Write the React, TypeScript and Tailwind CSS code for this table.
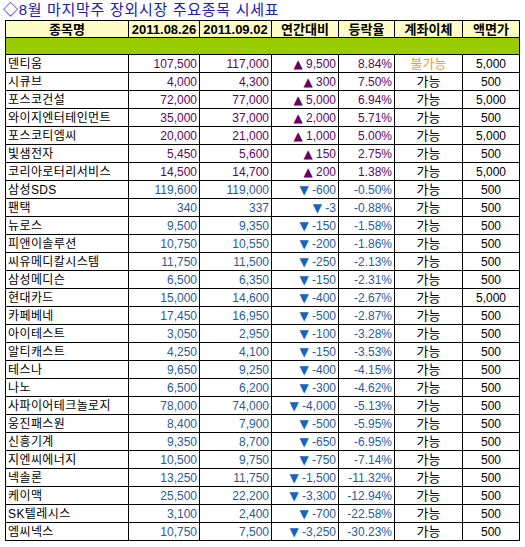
import React from 'react';

type Row = {
  name: string;
  prev: string;
  cur: string;
  diff: string;
  rate: string;
  transfer: string;
  face: string;
  up: boolean;
};

const rows: Row[] = [
  { name: '덴티움', prev: '107,500', cur: '117,000', diff: '9,500', rate: '8.84%', transfer: '불가능', face: '5,000', up: true },
  { name: '시큐브', prev: '4,000', cur: '4,300', diff: '300', rate: '7.50%', transfer: '가능', face: '500', up: true },
  { name: '포스코건설', prev: '72,000', cur: '77,000', diff: '5,000', rate: '6.94%', transfer: '가능', face: '5,000', up: true },
  { name: '와이지엔터테인먼트', prev: '35,000', cur: '37,000', diff: '2,000', rate: '5.71%', transfer: '가능', face: '500', up: true },
  { name: '포스코티엠씨', prev: '20,000', cur: '21,000', diff: '1,000', rate: '5.00%', transfer: '가능', face: '5,000', up: true },
  { name: '빛샘전자', prev: '5,450', cur: '5,600', diff: '150', rate: '2.75%', transfer: '가능', face: '500', up: true },
  { name: '코리아로터리서비스', prev: '14,500', cur: '14,700', diff: '200', rate: '1.38%', transfer: '가능', face: '5,000', up: true },
  { name: '삼성SDS', prev: '119,600', cur: '119,000', diff: '-600', rate: '-0.50%', transfer: '가능', face: '500', up: false },
  { name: '팬택', prev: '340', cur: '337', diff: '-3', rate: '-0.88%', transfer: '가능', face: '500', up: false },
  { name: '뉴로스', prev: '9,500', cur: '9,350', diff: '-150', rate: '-1.58%', transfer: '가능', face: '500', up: false },
  { name: '피앤이솔루션', prev: '10,750', cur: '10,550', diff: '-200', rate: '-1.86%', transfer: '가능', face: '500', up: false },
  { name: '씨유메디칼시스템', prev: '11,750', cur: '11,500', diff: '-250', rate: '-2.13%', transfer: '가능', face: '500', up: false },
  { name: '삼성메디슨', prev: '6,500', cur: '6,350', diff: '-150', rate: '-2.31%', transfer: '가능', face: '500', up: false },
  { name: '현대카드', prev: '15,000', cur: '14,600', diff: '-400', rate: '-2.67%', transfer: '가능', face: '5,000', up: false },
  { name: '카페베네', prev: '17,450', cur: '16,950', diff: '-500', rate: '-2.87%', transfer: '가능', face: '500', up: false },
  { name: '아이테스트', prev: '3,050', cur: '2,950', diff: '-100', rate: '-3.28%', transfer: '가능', face: '500', up: false },
  { name: '알티캐스트', prev: '4,250', cur: '4,100', diff: '-150', rate: '-3.53%', transfer: '가능', face: '500', up: false },
  { name: '테스나', prev: '9,650', cur: '9,250', diff: '-400', rate: '-4.15%', transfer: '가능', face: '500', up: false },
  { name: '나노', prev: '6,500', cur: '6,200', diff: '-300', rate: '-4.62%', transfer: '가능', face: '500', up: false },
  { name: '사파이어테크놀로지', prev: '78,000', cur: '74,000', diff: '-4,000', rate: '-5.13%', transfer: '가능', face: '500', up: false },
  { name: '웅진패스원', prev: '8,400', cur: '7,900', diff: '-500', rate: '-5.95%', transfer: '가능', face: '500', up: false },
  { name: '신흥기계', prev: '9,350', cur: '8,700', diff: '-650', rate: '-6.95%', transfer: '가능', face: '500', up: false },
  { name: '지엔씨에너지', prev: '10,500', cur: '9,750', diff: '-750', rate: '-7.14%', transfer: '가능', face: '500', up: false },
  { name: '넥솔론', prev: '13,250', cur: '11,750', diff: '-1,500', rate: '-11.32%', transfer: '가능', face: '500', up: false },
  { name: '케이맥', prev: '25,500', cur: '22,200', diff: '-3,300', rate: '-12.94%', transfer: '가능', face: '500', up: false },
  { name: 'SK텔레시스', prev: '3,100', cur: '2,400', diff: '-700', rate: '-22.58%', transfer: '가능', face: '500', up: false },
  { name: '엠씨넥스', prev: '10,750', cur: '7,500', diff: '-3,250', rate: '-30.23%', transfer: '가능', face: '500', up: false },
];

const headers = ['종목명', '2011.08.26', '2011.09.02', '연간대비', '등락율', '계좌이체', '액면가'];

const font = "font-['Liberation_Sans','Noto_Sans_CJK_KR',sans-serif]";

const App: React.FC = () => {
  return (
    <div className={`w-[525px] h-[547px] bg-white ${font}`}>
      {/* Title */}
      <div className="h-[20px] pl-[3px] pt-[1px] text-[15px] leading-[18px] tracking-[0.7px] text-[#2020b0]">
        ◇8월 마지막주 장외시장 주요종목 시세표
      </div>

      <table className="ml-[5px] w-[514px] table-fixed border-collapse border border-black">
        <colgroup>
          <col className="w-[123px]" />
          <col className="w-[71px]" />
          <col className="w-[72px]" />
          <col className="w-[67px]" />
          <col className="w-[56px]" />
          <col className="w-[68px]" />
          <col className="w-[57px]" />
        </colgroup>
        <thead>
          <tr className="h-[17px] bg-[#fefdc6]">
            {headers.map((h) => (
              <th
                key={h}
                className="border border-black p-0 text-center text-[13px] leading-[15px] font-bold text-black"
              >
                {h}
              </th>
            ))}
          </tr>
        </thead>
        <tbody>
          {/* Green separator row */}
          <tr className="h-[17px] bg-[#99cc00]">
            <td colSpan={7} className="border border-black p-0" />
          </tr>

          {rows.map((r) => {
            const color = r.up ? 'text-[#660066]' : 'text-[#1f5c9e]';
            return (
              <tr key={r.name} className="h-[18px] text-[12px] leading-[16px]">
                <td className="border border-black p-0 pl-[2px] text-left text-[12px] tracking-[0.4px] text-black whitespace-nowrap">
                  {r.name}
                </td>
                <td className={`border border-black p-0 pr-[2px] text-right ${color}`}>{r.prev}</td>
                <td className={`border border-black p-0 pr-[2px] text-right ${color}`}>{r.cur}</td>
                <td className={`border border-black p-0 pr-[2px] text-right whitespace-nowrap ${color}`}>
                  <span
                    className={`font-['DejaVu_Sans',sans-serif] text-[12px] leading-none ${
                      r.up ? 'text-[#660066]' : 'text-[#1565c0]'
                    }`}
                  >
                    {r.up ? '▲' : '▼'}
                  </span>{' '}
                  {r.diff}
                </td>
                <td className={`border border-black p-0 pr-[2px] text-right ${color}`}>{r.rate}</td>
                <td
                  className={`border border-black p-0 text-center text-[13px] ${
                    r.transfer === '불가능' ? 'text-[#ff9900]' : 'text-black'
                  }`}
                >
                  {r.transfer}
                </td>
                <td className="border border-black p-0 text-center text-black">{r.face}</td>
              </tr>
            );
          })}
        </tbody>
      </table>
    </div>
  );
};

export default App;
